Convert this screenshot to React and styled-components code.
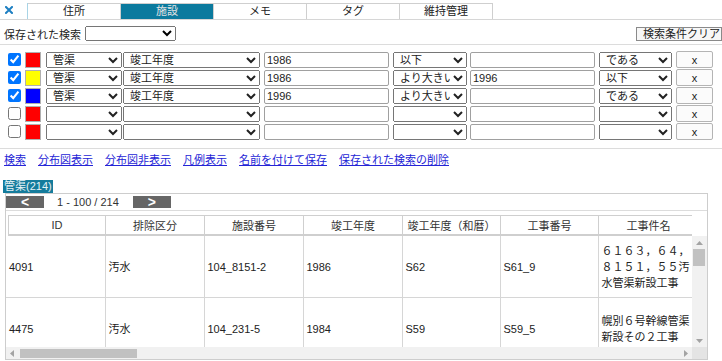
import React from 'react'
import styled, { createGlobalStyle } from 'styled-components'

const GlobalStyle = createGlobalStyle`
    body {
        margin: 0;
        background: #fff;
        color: #222;
        font-family: "Liberation Sans", "Noto Sans CJK JP", sans-serif;
        font-size: 11px;
        overflow: hidden;
    }
`

const Page = styled.div`
    width: 722px;
    height: 361px;
    overflow: hidden;
`

const TabBar = styled.div`
    display: flex;
    height: 20px;
    box-sizing: border-box;
    border-bottom: 1px solid #d6d6d6;
`

const CloseTab = styled.div`
    width: 28px;
    height: 16px;
    margin-top: 3px;
    box-sizing: border-box;
    padding: 1px 0 0 5px;
    border-right: 1px solid #a8d4e6;
`

const Tab = styled.div`
    width: 93px;
    height: 16px;
    margin-top: 3px;
    box-sizing: border-box;
    border-top: 1px solid #cfcfcf;
    border-right: 1px solid #cfcfcf;
    background: ${p => (p.$active ? '#0b7a9e' : '#fff')};
    color: ${p => (p.$active ? '#e4e4e4' : '#222')};
    text-align: center;
    line-height: 15px;
`

const SavedRow = styled.div`
    display: flex;
    align-items: center;
    height: 15px;
    margin: 6px 0 3px;
    padding-left: 4px;
`

const SavedSelect = styled.select`
    width: 91px;
    height: 15px;
    margin-left: 4px;
    padding: 0;
    font: inherit;
`

const ClearButton = styled.button`
    margin-left: auto;
    width: 86px;
    height: 14px;
    padding: 0 0 0 6px;
    text-align: left;
    font: inherit;
    line-height: 12px;
    color: #222;
    background: #f7f7f7;
    border: 1px solid #8a8a8a;
    border-radius: 0;
`

const FilterPanel = styled.div`
    display: flex;
    flex-direction: column;
    gap: 1px;
    padding: 6px 0 8px;
    border-top: 1px solid #dcdcdc;
    border-bottom: 1px solid #dcdcdc;
`

const FilterRow = styled.div`
    display: flex;
    align-items: center;
    height: 17px;
`

const Check = styled.input`
    width: 13px;
    height: 13px;
    margin: 0 0 0 8px;
`

const Swatch = styled.div`
    width: 16px;
    height: 16px;
    margin-left: 4px;
    box-sizing: border-box;
    border: 1px solid #b0b0b0;
    background: ${p => p.$color};
`

const Select = styled.select`
    width: ${p => p.$w}px;
    height: 16px;
    margin-left: ${p => p.$gap}px;
    padding: 0 0 0 2px;
    font: inherit;
    color: #222;
`

const TextBox = styled.input`
    width: 125px;
    height: 16px;
    margin-left: ${p => p.$gap}px;
    padding: 0 2px;
    box-sizing: border-box;
    font: inherit;
    color: #222;
    border: 1px solid #a0a0a0;
    border-radius: 2px;
`

const RemoveButton = styled.button`
    width: 37px;
    height: 17px;
    margin-left: 4px;
    padding: 0;
    font: inherit;
    color: #222;
    background: #fbfbfb;
    border: 1px solid #b4b4b4;
    border-radius: 2px;
`

const LinkBar = styled.div`
    display: flex;
    gap: 12px;
    height: 16px;
    margin-top: 3px;
    padding-left: 4px;
    line-height: 16px;
`

const Link = styled.a`
    color: #2424d6;
    text-decoration: underline;
    cursor: pointer;
`

const LayerLabel = styled.div`
    display: inline-block;
    margin: 12px 0 0 3px;
    height: 13px;
    padding: 0 1px;
    line-height: 13px;
    background: #157c9c;
    color: #e6f3f7;
`

const ResultBox = styled.div`
    width: 703px;
    height: 167px;
    margin-left: 5px;
    box-sizing: border-box;
    border: 1px solid #cdcdcd;
    display: flex;
    flex-direction: column;
`

const Pager = styled.div`
    display: flex;
    align-items: center;
    height: 16px;
    flex: none;
    border-bottom: 1px solid #dcdcdc;
`

const PageButton = styled.div`
    width: 38px;
    height: 12px;
    background: #666;
    color: #fff;
    font-size: 14px;
    font-weight: bold;
    line-height: 12px;
    text-align: center;
`

const PageInfo = styled.span`
    margin: 0 14px 0 13px;
    color: #333;
`

const HeadWrap = styled.div`
    flex: none;
    width: 684px;
    margin: 4px 0 0 2px;
    overflow: hidden;
`

const ScrollFrame = styled.div`
    flex: 1;
    min-height: 0;
    display: grid;
    grid-template-columns: 1fr 15px;
    grid-template-rows: 1fr 12px;
`

const BodyView = styled.div`
    overflow: hidden;
`

const VBar = styled.div`
    display: flex;
    flex-direction: column;
    background: #f1f1f1;
`

const HBar = styled.div`
    display: flex;
    align-items: center;
    background: #f1f1f1;
`

const Corner = styled.div`
    background: #e4e4e4;
`

const ArrowBox = styled.div`
    flex: none;
    width: ${p => p.$w}px;
    height: ${p => p.$h}px;
    display: flex;
    align-items: center;
    justify-content: center;
`

const VThumb = styled.div`
    flex: none;
    height: 17px;
    margin: 0 2px 0 1px;
    background: #c1c1c1;
`

const HThumb = styled.div`
    flex: none;
    width: 117px;
    height: 9px;
    margin: 1px 0 0 2px;
    background: #c1c1c1;
`

const Fill = styled.div`
    flex: 1;
`

const Grid = styled.table`
    width: 3900px;
    table-layout: fixed;
    border-collapse: collapse;
    font-size: 11px;
`

const HeadCell = styled.th`
    height: 18px;
    padding: 0;
    font-weight: normal;
    color: #333;
    border: 1px solid #cfcfcf;
    border-bottom: 2px solid #cfcfcf;
    white-space: nowrap;
    overflow: hidden;
`

const Cell = styled.td`
    height: 61px;
    padding: 0 3px;
    line-height: 16px;
    color: #222;
    vertical-align: middle;
    border-right: 1px solid #d6d6d6;
    border-bottom: 1px solid #d6d6d6;
    word-break: break-all;
`

const columns = [
    { key: 'id', label: 'ID', w: 97 },
    { key: 'kubun', label: '排除区分', w: 99 },
    { key: 'no', label: '施設番号', w: 99 },
    { key: 'year', label: '竣工年度', w: 99 },
    { key: 'wareki', label: '竣工年度（和暦）', w: 98 },
    { key: 'kouji', label: '工事番号', w: 98 },
    { key: 'name', label: '工事件名', w: 100 },
    { key: 'rest', label: '' },
]

const bodyColumns = columns.map((c, i) => (i === 0 ? { ...c, w: 99 } : c))

const rows = [
    ['4091', '汚水', '104_8151-2', '1986', 'S62', 'S61_9', '６１６３，６４，８１５１，５５汚水管渠新設工事'],
    ['4475', '汚水', '104_231-5', '1984', 'S59', 'S59_5', '幌別６号幹線管渠新設その２工事'],
]

const filters = [
    { on: true, color: '#ff0000', kind: '管渠', attr: '竣工年度', v1: '1986', op1: '以下', v2: '', op2: 'である' },
    { on: true, color: '#ffff00', kind: '管渠', attr: '竣工年度', v1: '1986', op1: 'より大きい', v2: '1996', op2: '以下' },
    { on: true, color: '#0000ff', kind: '管渠', attr: '竣工年度', v1: '1996', op1: 'より大きい', v2: '', op2: 'である' },
    { on: false, color: '#ff0000', kind: '', attr: '', v1: '', op1: '', v2: '', op2: '' },
    { on: false, color: '#ff0000', kind: '', attr: '', v1: '', op1: '', v2: '', op2: '' },
]

const links = ['検索', '分布図表示', '分布図非表示', '凡例表示', '名前を付けて保存', '保存された検索の削除']
const tabs = ['住所', '施設', 'メモ', 'タグ', '維持管理']

const CloseIcon = () => (
    <svg width="8" height="8" viewBox="0 0 8 8">
        <path d="M1 1 L7 7 M7 1 L1 7" stroke="#1d7fc2" strokeWidth="2" strokeLinecap="square" />
    </svg>
)

const arrowPaths = {
    up: { w: 7, h: 4, d: 'M0 4 L3.5 0 L7 4 Z' },
    down: { w: 7, h: 4, d: 'M0 0 L7 0 L3.5 4 Z' },
    left: { w: 4, h: 7, d: 'M4 0 L0 3.5 L4 7 Z' },
    right: { w: 4, h: 7, d: 'M0 0 L4 3.5 L0 7 Z' },
}

const Arrow = ({ dir, w, h }) => {
    const a = arrowPaths[dir]
    return (
        <ArrowBox $w={w} $h={h}>
            <svg width={a.w} height={a.h} viewBox={`0 0 ${a.w} ${a.h}`}>
                <path d={a.d} fill="#a3a3a3" />
            </svg>
        </ArrowBox>
    )
}

const Cols = ({ list }) => (
    <colgroup>
        {list.map(c => <col key={c.key} style={c.w ? { width: c.w } : undefined} />)}
    </colgroup>
)

export default function App() {
    return (
        <Page>
            <GlobalStyle />
            <TabBar>
                <CloseTab><CloseIcon /></CloseTab>
                {tabs.map(t => (
                    <Tab key={t} $active={t === '施設'}>{t}</Tab>
                ))}
            </TabBar>

            <SavedRow>
                <span>保存された検索</span>
                <SavedSelect defaultValue="">
                    <option value=""></option>
                </SavedSelect>
                <ClearButton>検索条件クリア</ClearButton>
            </SavedRow>

            <FilterPanel>
                {filters.map((f, i) => (
                    <FilterRow key={i}>
                        <Check type="checkbox" defaultChecked={f.on} />
                        <Swatch $color={f.color} />
                        <Select $w={76} $gap={5} defaultValue={f.kind}><option>{f.kind}</option></Select>
                        <Select $w={137} $gap={1} defaultValue={f.attr}><option>{f.attr}</option></Select>
                        <TextBox $gap={4} defaultValue={f.v1} />
                        <Select $w={74} $gap={4} defaultValue={f.op1}><option>{f.op1}</option></Select>
                        <TextBox $gap={3} defaultValue={f.v2} />
                        <Select $w={73} $gap={4} defaultValue={f.op2}><option>{f.op2}</option></Select>
                        <RemoveButton>x</RemoveButton>
                    </FilterRow>
                ))}
            </FilterPanel>

            <LinkBar>
                {links.map(l => <Link key={l}>{l}</Link>)}
            </LinkBar>

            <LayerLabel>管渠(214)</LayerLabel>

            <ResultBox>
                <Pager>
                    <PageButton>&lt;</PageButton>
                    <PageInfo>1 - 100 / 214</PageInfo>
                    <PageButton>&gt;</PageButton>
                </Pager>
                <HeadWrap>
                    <Grid>
                        <Cols list={columns} />
                        <thead>
                            <tr>
                                {columns.map(c => <HeadCell key={c.key}>{c.label}</HeadCell>)}
                            </tr>
                        </thead>
                    </Grid>
                </HeadWrap>
                <ScrollFrame>
                    <BodyView>
                        <Grid>
                            <Cols list={bodyColumns} />
                            <tbody>
                                {rows.map(r => (
                                    <tr key={r[0]}>
                                        {columns.map((c, i) => <Cell key={c.key}>{r[i] || ''}</Cell>)}
                                    </tr>
                                ))}
                            </tbody>
                        </Grid>
                    </BodyView>
                    <VBar>
                        <Arrow dir="up" w={15} h={13} />
                        <VThumb />
                        <Fill />
                        <Arrow dir="down" w={15} h={13} />
                    </VBar>
                    <HBar>
                        <Arrow dir="left" w={12} h={12} />
                        <HThumb />
                        <Fill />
                        <Arrow dir="right" w={12} h={12} />
                    </HBar>
                    <Corner />
                </ScrollFrame>
            </ResultBox>
        </Page>
    )
}
